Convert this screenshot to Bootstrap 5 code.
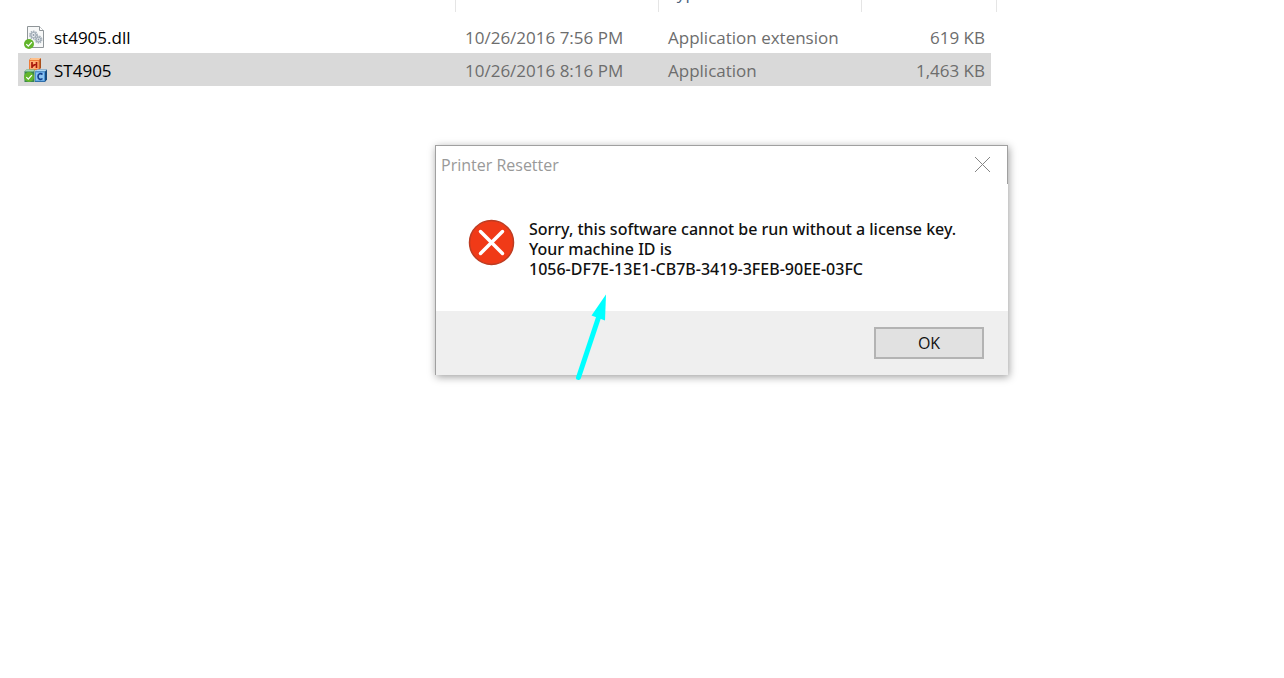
<!DOCTYPE html>
<html lang="en">
<head>
<meta charset="utf-8">
<meta name="viewport" content="width=device-width, initial-scale=1">
<title>Printer Resetter</title>
<link href="https://cdn.jsdelivr.net/npm/bootstrap@5.3.0/dist/css/bootstrap.min.css" rel="stylesheet">
<style>
  body { font-family: "Open Sans", "Noto Sans", sans-serif; font-size: 17px; color: #000; background: #fff; }
  .explorer { padding-left: 18px; }
  /* The list is scrolled so that only the foot of the header row shows */
  .file-list { table-layout: fixed; width: 973px; margin: -20px 0 0; line-height: 24px; }
  .file-list th, .file-list td { padding: 0 6px; white-space: nowrap; vertical-align: middle; }
  .file-list thead th { height: 32px; font-weight: 400; color: #4c607a; position: relative; padding-left: 9px; padding-bottom: 6px; }
  .file-list thead th + th { border-left: 1px solid #e5e5e5; }
  .file-list thead th:last-child::after { content: ""; position: absolute; top: 0; bottom: 0; right: -6px; width: 1px; background: #e5e5e5; }
  .file-list .gap-row td { height: 8px; }
  .file-list .file td { height: 33px; color: #6d6d6d; padding-top: 2px; padding-left: 10px; }
  .file-list .file td.file-name { color: #000; padding-left: 6px; }
  .file-list .selected td { background: #d9d9d9; }
  .col-name { width: 437px; }
  .col-mid { width: 203px; }
  .file-label { gap: 6px; }
  .file-icon { width: 24px; height: 28px; flex: none; }

  .msgbox { position: absolute; left: 435px; top: 145px; width: 573px; background: #fff; border: solid #a0a0a0; border-width: 1px 0 0 1px; box-shadow: 1px 2px 8px rgba(0,0,0,.38); }
  .titlebar { height: 38px; padding: 0 16px 0 5px; font-size: 16px; color: #999; border-right: 1px solid #a0a0a0; }
  .close-x { width: 17px; height: 17px; padding: 0; border: 0; background: none; line-height: 0; }
  .msg-body { padding: 35px 32px 32px; gap: 14px; line-height: 20px; font-family: "Noto Sans", "Open Sans", sans-serif; font-size: 16px; font-weight: 500; color: #111; }
  .err-icon { width: 47px; height: 47px; flex: none; }
  .msg-foot { background: #efefef; padding: 16px 24px 16px; }
  .ok-btn { width: 110px; height: 32px; padding: 0; line-height: 28px; font-size: 16px; font-weight: 500; color: #111; background: #e1e1e1; border: 2px solid #b3b3b3; border-radius: 0; }
  .pointer { position: absolute; left: 138px; top: 145px; width: 36px; height: 92px; }
</style>
</head>
<body>
<main class="explorer position-relative overflow-hidden min-vh-100">
  <table class="file-list">
    <colgroup><col class="col-name"><col class="col-mid"><col class="col-mid"><col></colgroup>
    <thead><tr><th></th><th></th><th scope="col">Type</th><th></th></tr></thead>
    <tbody>
      <tr class="gap-row"><td colspan="4"></td></tr>
      <tr class="file">
        <td class="file-name"><div class="file-label d-flex align-items-center">
          <svg class="file-icon" viewBox="0 0 24 28" aria-hidden="true">
            <path d="M3.500 2.500h12l4 4v17h-16z" fill="#f7f8f8" stroke="#8f9598"/>
            <path d="M15.500 2.500v4h4" fill="#fff" stroke="#8f9598"/>
            <circle cx="9.500" cy="11" r="3.600" fill="#dbe3e9" stroke="#a3aeb7" stroke-width="1.600" stroke-dasharray="1.500 .8"/>
            <circle cx="9.500" cy="11" r="2.500" fill="#eef2f5" stroke="#8b98a3" stroke-width=".8"/><circle cx="9.500" cy="11" r="1" fill="#8b98a3"/>
            <circle cx="14.500" cy="15.500" r="3.200" fill="#dbe3e9" stroke="#a3aeb7" stroke-width="1.600" stroke-dasharray="1.400 .8"/>
            <circle cx="14.500" cy="15.500" r="2.200" fill="#eef2f5" stroke="#8b98a3" stroke-width=".8"/><circle cx="14.500" cy="15.500" r=".9" fill="#8b98a3"/>
            <circle cx="5" cy="20" r="5" fill="#62b52b"/><path d="M2.300 20.100l2 2 3.600-4" fill="none" stroke="#fff" stroke-width="1.300"/>
          </svg><span>st4905.dll</span></div></td>
        <td>10/26/2016 7:56 PM</td><td>Application extension</td><td class="text-end">619 KB</td>
      </tr>
      <tr class="file selected">
        <td class="file-name"><div class="file-label d-flex align-items-center">
          <svg class="file-icon" viewBox="0 0 24 28" aria-hidden="true">
            <path d="M5 3l2-2h10v10l-2 2H5z" fill="#a94e1b"/><path d="M5 3l2-2h10l-2 2z" fill="#ffc08a"/><rect x="5" y="3" width="10.500" height="10" fill="#f07a35"/><rect x="6" y="4" width="8.500" height="8" fill="#ffae73"/>
            <path d="M8 5v6M12.500 5v6M8 9.500l4.500-3" fill="none" stroke="#a9180b" stroke-width="1.700"/>
            <path d="M.5 14.500l2-2h8V25H.5z" fill="#398451"/><path d="M.5 14.500l2-2h8l-1 2z" fill="#a5d9b5"/>
            <path d="M11 14.500l2-2h10v10L21 25H11z" fill="#174a7e"/><path d="M11 14.500l2-2h10l-2 2z" fill="#b1d9f4"/><rect x="11" y="14.500" width="10" height="10" fill="#4b94d8"/><rect x="12" y="15.500" width="8" height="8" fill="#8dc4f1"/>
            <path d="M18.500 17.500c-1.500-1.500-4.500-1-4.500 2s3 3.500 4.500 2" fill="none" stroke="#13418f" stroke-width="1.700"/>
            <circle cx="5" cy="20" r="5" fill="#62b52b"/><path d="M2.300 20.100l2 2 3.600-4" fill="none" stroke="#fff" stroke-width="1.300"/>
          </svg><span>ST4905</span></div></td>
        <td>10/26/2016 8:16 PM</td><td>Application</td><td class="text-end">1,463 KB</td>
      </tr>
    </tbody>
  </table>

  <section class="msgbox" role="alertdialog" aria-labelledby="msg-title" aria-describedby="msg-text">
    <header class="titlebar d-flex align-items-center justify-content-between">
      <span id="msg-title">Printer Resetter</span>
      <button type="button" class="close-x" aria-label="Close"><svg width="17" height="17" viewBox="0 0 17 17"><path d="M1 0l15 15M16 0L1 15" stroke="#858585" fill="none"/></svg></button>
    </header>
    <div class="msg-body d-flex">
      <svg class="err-icon" viewBox="0 0 47 47" aria-hidden="true"><circle cx="23.500" cy="23.500" r="22" fill="#f03a17" stroke="#bd3c22" stroke-width="1.500"/><path d="M12.500 12.500l22 22M34.500 12.500l-22 22" stroke="#fff" stroke-width="3.500" stroke-linecap="round"/></svg>
      <div id="msg-text" class="text-nowrap">Sorry, this software cannot be run without a license key.<br>Your machine ID is<br>1056-DF7E-13E1-CB7B-3419-3FEB-90EE-03FC</div>
    </div>
    <footer class="msg-foot d-flex justify-content-end"><button type="button" class="ok-btn">OK</button></footer>
    <svg class="pointer" viewBox="0 0 36 92" aria-hidden="true"><path d="M4.500 86.500L26 22" stroke="#0ff" stroke-width="5" stroke-linecap="round"/><path d="M32 3.500L17.500 24.500L31 29.500z" fill="#0ff"/></svg>
  </section>
</main>
<script src="https://cdn.jsdelivr.net/npm/bootstrap@5.3.0/dist/js/bootstrap.bundle.min.js"></script>
</body>
</html>
